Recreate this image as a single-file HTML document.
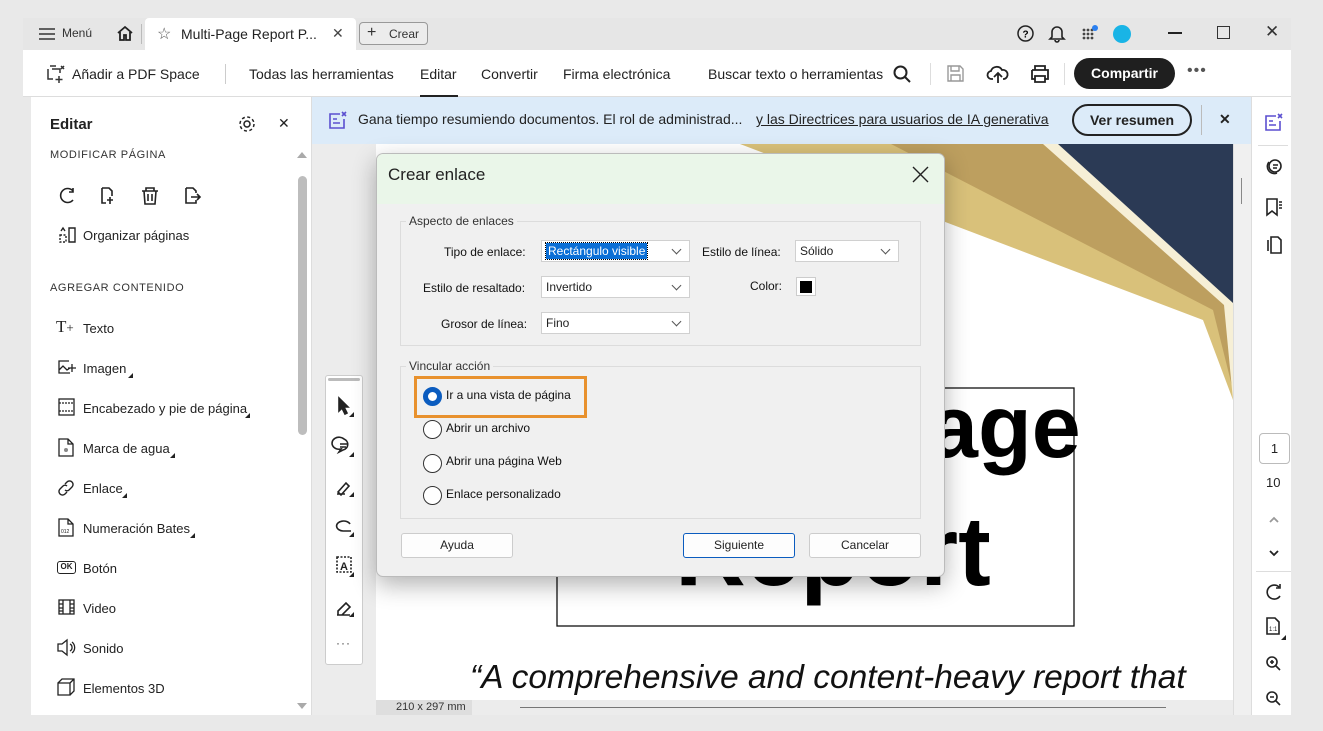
<!DOCTYPE html>
<html><head><meta charset="utf-8">
<style>
*{box-sizing:border-box;margin:0;padding:0}
body{width:1323px;height:731px;background:#e9e9e9;font-family:"Liberation Sans",sans-serif;color:#222;position:relative;overflow:hidden}
.a{position:absolute}
.t{position:absolute;white-space:nowrap}
svg{position:absolute;overflow:visible}
.sec{font-size:11px;letter-spacing:.6px;color:#333}
.it{font-size:13px;color:#222}
.dl{font-size:12px;color:#111}
.sel{position:absolute;height:22px;background:#fff;border:1px solid #d0d0d0;font-size:12px;padding:3px 0 0 4px}
.sel:after{content:"";position:absolute;right:9px;top:5px;width:6px;height:6px;border-right:1px solid #555;border-bottom:1px solid #555;transform:rotate(45deg)}
.rad{position:absolute;width:19px;height:19px;border:1px solid #333;border-radius:50%;background:#fff}
.btn{position:absolute;height:25px;background:#fdfdfd;border:1px solid #ccc;border-radius:3px;font-size:12px;text-align:center;line-height:23px}
.tri{position:absolute;width:0;height:0;border-left:5px solid transparent;border-bottom:5px solid #222}
</style></head><body>
<!-- title bar -->
<div class="a" style="left:23px;top:18px;width:1268px;height:32px;background:#e6e6e6"></div>
<svg style="left:39px;top:27px" width="16" height="14"><path d="M0 2h16M0 7h16M0 12h16" stroke="#333" stroke-width="1.5"/></svg>
<div class="t" style="left:62px;top:26px;font-size:12px;color:#333">Menú</div>
<svg style="left:116px;top:25px" width="18" height="16"><path d="M2 8L9 2l7 6M4 7v8h4v-5h2v5h4V7" fill="none" stroke="#222" stroke-width="1.8"/></svg>
<div class="a" style="left:141px;top:24px;width:1px;height:20px;background:#bbb"></div>
<div class="a" style="left:145px;top:18px;width:211px;height:32px;background:#fff;border-radius:4px 4px 0 0"></div>
<div class="t" style="left:157px;top:24px;font-size:16px;color:#555">☆</div>
<div class="t" style="left:181px;top:26px;font-size:14px;color:#222">Multi-Page Report P...</div>
<div class="t" style="left:332px;top:25px;font-size:14px;color:#444">✕</div>
<div class="a" style="left:359px;top:22px;width:69px;height:23px;border:1px solid #999;border-radius:4px;background:#ececec"></div>
<div class="t" style="left:367px;top:24px;font-size:16px;color:#333">+</div>
<div class="t" style="left:389px;top:27px;font-size:12px;color:#333">Crear</div>
<svg style="left:1017px;top:25px" width="17" height="17"><circle cx="8.5" cy="8.5" r="7.5" fill="none" stroke="#222" stroke-width="1.5"/><text x="8.5" y="12.5" font-size="10" font-weight="bold" text-anchor="middle" font-family="Liberation Sans">?</text></svg>
<svg style="left:1049px;top:24px" width="16" height="19"><path d="M3 13V8a5 5 0 0110 0v5l2 2H1zM6 16a2 2 0 004 0" fill="none" stroke="#222" stroke-width="1.6"/></svg>
<svg style="left:1082px;top:25px" width="18" height="18"><g fill="#444"><circle cx="2" cy="5" r="1.4"/><circle cx="6" cy="5" r="1.4"/><circle cx="2" cy="9" r="1.4"/><circle cx="6" cy="9" r="1.4"/><circle cx="10" cy="9" r="1.4"/><circle cx="2" cy="13" r="1.4"/><circle cx="6" cy="13" r="1.4"/><circle cx="10" cy="13" r="1.4"/><circle cx="10" cy="5" r="1.4"/></g><circle cx="13" cy="3" r="3" fill="#2a7ff0"/></svg>
<div class="a" style="left:1113px;top:25px;width:18px;height:18px;border-radius:50%;background:#19b4e6"></div>
<div class="a" style="left:1168px;top:32px;width:14px;height:2px;background:#222"></div>
<div class="a" style="left:1217px;top:26px;width:13px;height:13px;border:1.5px solid #333"></div>
<div class="t" style="left:1265px;top:22px;font-size:17px;color:#333">✕</div>
<!-- toolbar -->
<div class="a" style="left:23px;top:50px;width:1268px;height:47px;background:#fff;border-bottom:1px solid #ddd"></div>
<svg style="left:46px;top:64px" width="20" height="20"><path d="M4 2h6M2 5v10h5M6 5h8v4M13 12v7M9.5 15.5h7M15 2l3 3M18 2l-3 3" fill="none" stroke="#333" stroke-width="1.5"/></svg>
<div class="t" style="left:72px;top:66px;font-size:14px">Añadir a PDF Space</div>
<div class="a" style="left:225px;top:64px;width:1px;height:20px;background:#ccc"></div>
<div class="t" style="left:249px;top:66px;font-size:14px">Todas las herramientas</div>
<div class="t" style="left:420px;top:66px;font-size:14px">Editar</div>
<div class="a" style="left:420px;top:95px;width:38px;height:3px;background:#222"></div>
<div class="t" style="left:481px;top:66px;font-size:14px">Convertir</div>
<div class="t" style="left:563px;top:66px;font-size:14px">Firma electrónica</div>
<div class="t" style="left:708px;top:66px;font-size:14px">Buscar texto o herramientas</div>
<svg style="left:893px;top:65px" width="18" height="18"><circle cx="7.5" cy="7.5" r="6" fill="none" stroke="#222" stroke-width="2"/><path d="M12 12l5 5" stroke="#222" stroke-width="2"/></svg>
<div class="a" style="left:930px;top:63px;width:1px;height:22px;background:#ddd"></div>
<svg style="left:947px;top:65px" width="17" height="17"><path d="M1 1h12l3 3v12H1z M4 1v5h8V1 M4 16v-6h9v6" fill="none" stroke="#999" stroke-width="1.4"/></svg>
<svg style="left:987px;top:64px" width="22" height="20"><path d="M6 15H5a4 4 0 01-1-8 6 6 0 0111-1 4 4 0 012 9h-1M11 19v-9M7 13l4-4 4 4" fill="none" stroke="#222" stroke-width="1.8"/></svg>
<svg style="left:1030px;top:65px" width="20" height="18"><path d="M5 5V1h10v4M2 5h16v9h-3M5 14H2V5M5 11h10v6H5z" fill="none" stroke="#222" stroke-width="1.8"/></svg>
<div class="a" style="left:1064px;top:63px;width:1px;height:22px;background:#ddd"></div>
<div class="a" style="left:1074px;top:58px;width:101px;height:31px;border-radius:16px;background:#1f1f1f;color:#fff;font-size:14px;font-weight:bold;text-align:center;line-height:31px">Compartir</div>
<div class="t" style="left:1187px;top:62px;font-size:16px;color:#555;letter-spacing:1px">•••</div>
<!-- left panel -->
<div class="a" style="left:31px;top:97px;width:281px;height:618px;background:#fff;border-right:1px solid #ddd"></div>
<div class="t" style="left:50px;top:116px;font-size:15px;font-weight:bold">Editar</div>
<svg style="left:238px;top:115px" width="18" height="18"><circle cx="9" cy="9" r="3" fill="none" stroke="#222" stroke-width="1.5"/><circle cx="9" cy="9" r="7" fill="none" stroke="#222" stroke-width="1.5" stroke-dasharray="3 2.5"/></svg>
<div class="t" style="left:278px;top:115px;font-size:14px">✕</div>
<div class="t sec" style="left:50px;top:149px">MODIFICAR PÁGINA</div>
<div class="t sec" style="left:50px;top:282px">AGREGAR CONTENIDO</div>
<svg style="left:58px;top:186px" width="160" height="20" fill="none" stroke="#222" stroke-width="1.6"><path d="M15 5A7 7 0 1015 14M15 2v4h-4"/><path d="M44 2h7l3 3v5M44 2v15h4M52 11v7M49 14h6"/><path d="M84 5h16M88 5V2h8v3M86 5l1 13h10l1-13M90 8v7M94 8v7"/><path d="M128 2h7l3 3v2M128 2v15h10v-3M133 11h9M139 8l3 3-3 3"/></svg>
<svg style="left:58px;top:226px" width="18" height="18" fill="none" stroke="#222" stroke-width="1.4"><path d="M11 2h6v14h-6z" /><path d="M2 9h6v7H2z" stroke-dasharray="2 1.5"/><path d="M3 5l2-3 2 3"/></svg>
<div class="t it" style="left:83px;top:228px">Organizar páginas</div>
<div class="t" style="left:56px;top:317px;font-size:17px;font-family:'Liberation Serif',serif">T<span style="font-size:13px">+</span></div>
<div class="t it" style="left:83px;top:321px">Texto</div>
<svg style="left:58px;top:359px" width="19" height="17" fill="none" stroke="#222" stroke-width="1.3"><path d="M11 2H1v12h11M1 11l4-4 4 4 3-2M14 5v8M10 9h8"/></svg>
<div class="t it" style="left:83px;top:361px">Imagen</div><div class="tri" style="left:128px;top:373px"></div>
<svg style="left:58px;top:398px" width="17" height="19" fill="none" stroke="#222" stroke-width="1.3"><rect x="1" y="1" width="15" height="16"/><path d="M1 5h15M1 13h15" stroke-dasharray="2 1"/></svg>
<div class="t it" style="left:83px;top:401px">Encabezado y pie de página</div><div class="tri" style="left:245px;top:413px"></div>
<svg style="left:58px;top:438px" width="16" height="19" fill="none" stroke="#222" stroke-width="1.3"><path d="M1 1h9l5 5v12H1zM10 1v5h5"/><circle cx="8" cy="12" r="2" fill="#888" stroke="none"/></svg>
<div class="t it" style="left:83px;top:441px">Marca de agua</div><div class="tri" style="left:170px;top:453px"></div>
<svg style="left:57px;top:479px" width="18" height="18" fill="none" stroke="#222" stroke-width="1.4"><path d="M8 5l2-2a3 3 0 015 5l-3 3a3 3 0 01-4 0M10 13l-2 2a3 3 0 01-5-5l3-3a3 3 0 014 0"/></svg>
<div class="t it" style="left:83px;top:481px">Enlace</div><div class="tri" style="left:122px;top:493px"></div>
<svg style="left:58px;top:518px" width="16" height="19" fill="none" stroke="#222" stroke-width="1.3"><path d="M1 1h9l5 5v12H1zM10 1v5h5"/><text x="3" y="15" font-size="5" fill="#222" stroke="none">012</text></svg>
<div class="t it" style="left:83px;top:521px">Numeración Bates</div><div class="tri" style="left:190px;top:533px"></div>
<div class="a" style="left:57px;top:561px;width:19px;height:13px;border:1.4px solid #222;border-radius:3px;font-size:8px;font-weight:bold;text-align:center;line-height:10px">OK</div>
<div class="t it" style="left:83px;top:561px">Botón</div>
<svg style="left:58px;top:599px" width="17" height="16" fill="none" stroke="#222" stroke-width="1.3"><rect x="1" y="1" width="15" height="14"/><path d="M5 1v14M12 1v14M1 5h4M1 9h4M12 5h4M12 9h4M1 12h4M12 12h4"/></svg>
<div class="t it" style="left:83px;top:601px">Video</div>
<svg style="left:57px;top:639px" width="20" height="17" fill="none" stroke="#222" stroke-width="1.3"><path d="M1 5h4l5-4v15l-5-4H1zM13 5a4 4 0 010 7M15 3a7 7 0 010 11"/></svg>
<div class="t it" style="left:83px;top:641px">Sonido</div>
<svg style="left:57px;top:678px" width="19" height="18" fill="none" stroke="#222" stroke-width="1.3"><path d="M1 5h12v12H1zM1 5l4-4h12v12l-4 4M13 5l4-4"/></svg>
<div class="t it" style="left:83px;top:681px">Elementos 3D</div>
<div class="a" style="left:298px;top:176px;width:9px;height:259px;background:#bdbdbd;border-radius:5px"></div>
<div class="tri" style="left:297px;top:152px;border-left:5px solid transparent;border-right:5px solid transparent;border-bottom:6px solid #aaa"></div>
<div class="a" style="left:297px;top:703px;width:0;height:0;border-left:5px solid transparent;border-right:5px solid transparent;border-top:6px solid #aaa"></div>
<!-- doc area -->
<div class="a" style="left:312px;top:97px;width:939px;height:618px;background:#ececec"></div>
<div class="a" style="left:376px;top:144px;width:857px;height:556px;background:#fff;overflow:hidden">
<svg style="left:0;top:0" width="857" height="556">
<polygon points="364,0 857,0 857,256 827,176" fill="#d9c17a"/>
<polygon points="515,0 857,0 857,246 837,166" fill="#bd9f5f"/>
<polygon points="667,0 857,0 857,256 848,161" fill="#f6efd6"/>
<polygon points="682,0 857,0 857,159" fill="#2b3a55"/>
<rect x="181" y="244" width="517" height="238" fill="none" stroke="#111" stroke-width="1.3"/>
<text x="553" y="313" font-family="Liberation Sans" font-weight="bold" font-size="88" fill="#000">age</text>
<text x="299" y="441" font-family="Liberation Sans" font-weight="bold" font-size="98" fill="#000">Report</text>
<text x="94" y="544" font-family="Liberation Sans" font-style="italic" font-size="33.5" fill="#111">“A comprehensive and content-heavy report that</text>
</svg>
</div>
<div class="a" style="left:376px;top:700px;width:857px;height:15px;background:#ececec"></div>
<div class="a" style="left:376px;top:700px;width:96px;height:15px;background:#dedede"></div>
<div class="t" style="left:396px;top:701px;font-size:11px;color:#333">210 x 297 mm</div>
<div class="a" style="left:520px;top:707px;width:646px;height:1px;background:#777"></div>
<div class="a" style="left:1233px;top:144px;width:18px;height:571px;background:#f0f0f0;border-left:1px solid #ddd"></div>
<div class="a" style="left:1241px;top:178px;width:1px;height:26px;background:#888"></div>
<!-- floating toolbar -->
<div class="a" style="left:325px;top:375px;width:38px;height:290px;background:#fff;border:1px solid #ccc;border-radius:3px"></div>
<div class="a" style="left:328px;top:378px;width:32px;height:3px;background:#bbb;border-radius:2px"></div>
<svg style="left:334px;top:395px" width="22" height="250" fill="none" stroke="#222" stroke-width="1.6">
<path d="M5 3v13l3-3 3 6 2-1-3-6h4z" fill="#222"/>
<path d="M10 44a7 6 0 10-3 10l-2 3 4-2a7 6 0 001-11zM6 49h8M6 52h6"/>
<path d="M4 97l8-9 3 3-8 9zM3 99h8"/>
<path d="M16 129a7 5 0 10-7 7h8"/>
<rect x="3" y="162" width="14" height="15" stroke-dasharray="2 1.5"/><text x="6" y="175" font-size="11" font-weight="bold" fill="#222" stroke="none" font-family="Liberation Sans">A</text>
<path d="M4 216l8-8 4 4-8 8H4zM3 220h13"/>
</svg>
<div class="tri" style="left:349px;top:412px"></div><div class="tri" style="left:349px;top:452px"></div><div class="tri" style="left:349px;top:492px"></div><div class="tri" style="left:349px;top:532px"></div><div class="tri" style="left:349px;top:572px"></div><div class="tri" style="left:349px;top:612px"></div>
<div class="t" style="left:336px;top:636px;font-size:12px;color:#444;letter-spacing:1px">···</div>
<!-- banner -->
<div class="a" style="left:312px;top:97px;width:939px;height:47px;background:#dcebf9"></div>
<svg style="left:328px;top:111px" width="20" height="19" fill="none" stroke="#5b4fd0" stroke-width="1.6"><path d="M12 3H2v14h14V8M5 8h4M5 12h7M14 1l4 4M18 1l-4 4"/></svg>
<div class="t" style="left:358px;top:111px;font-size:14px;color:#222">Gana tiempo resumiendo documentos. El rol de administrad...</div>
<div class="t" style="left:756px;top:111px;font-size:14px;color:#222;text-decoration:underline">y las Directrices para usuarios de IA generativa</div>
<div class="a" style="left:1072px;top:104px;width:120px;height:32px;border:2px solid #222;border-radius:16px;font-size:14px;font-weight:bold;text-align:center;line-height:28px">Ver resumen</div>
<div class="a" style="left:1201px;top:105px;width:1px;height:30px;background:#bbb"></div>
<div class="t" style="left:1219px;top:111px;font-size:14px;font-weight:bold">✕</div>
<!-- right rail -->
<div class="a" style="left:1251px;top:97px;width:40px;height:618px;background:#fff;border-left:1px solid #ddd"></div>
<svg style="left:1264px;top:113px" width="20" height="19" fill="none" stroke="#5b4fd0" stroke-width="1.6"><path d="M12 3H2v14h14V8M5 8h4M5 12h7M14 1l4 4M18 1l-4 4"/></svg>
<div class="a" style="left:1258px;top:145px;width:30px;height:1px;background:#ddd"></div>
<svg style="left:1265px;top:157px" width="18" height="100" fill="none" stroke="#222" stroke-width="1.6">
<circle cx="10" cy="9" r="6"/><path d="M8 8h5M8 11h4M4 5a7 7 0 008 11"/>
<path d="M2 42h10v16l-5-4-5 4zM14 45h3M14 48h3M14 51h3"/>
<path d="M6 80h7l3 3v13H6zM3 83v11"/>
</svg>
<div class="a" style="left:1259px;top:433px;width:31px;height:31px;border:1px solid #bbb;border-radius:4px;font-size:13px;text-align:center;line-height:29px">1</div>
<div class="t" style="left:1266px;top:475px;font-size:13px">10</div>
<svg style="left:1268px;top:515px" width="12" height="45" fill="none" stroke-width="1.8"><path d="M2 7l4-4 4 4" stroke="#999"/><path d="M2 36l4 4 4-4" stroke="#222"/></svg>
<div class="a" style="left:1256px;top:571px;width:35px;height:1px;background:#ddd"></div>
<svg style="left:1265px;top:583px" width="20" height="125" fill="none" stroke="#222" stroke-width="1.6">
<path d="M14 4A7 7 0 1015 13M15 1v4h-4"/>
<path d="M2 35h8l4 4v12H2z"/><text x="4" y="48" font-size="6" fill="#222" stroke="none">1:1</text>
<circle cx="7" cy="79" r="5"/><path d="M11 83l4 4M5 79h4M7 77v4"/>
<circle cx="7" cy="114" r="5"/><path d="M11 118l4 4M5 114h4"/>
</svg>
<div class="tri" style="left:1281px;top:635px"></div>
<!-- dialog -->
<div class="a" style="left:376px;top:153px;width:569px;height:424px;background:#f0f0f0;border:1px solid #bbb;border-radius:7px;box-shadow:0 8px 24px rgba(0,0,0,.3);overflow:hidden">
<div class="a" style="left:0;top:0;width:569px;height:50px;background:#eaf6e9"></div>
</div>
<div class="t" style="left:388px;top:165px;font-size:17px;color:#222">Crear enlace</div>
<svg style="left:912px;top:166px" width="17" height="17"><path d="M1 1l15 15M16 1L1 16" stroke="#222" stroke-width="1.4"/></svg>
<div class="a" style="left:400px;top:221px;width:521px;height:125px;border:1px solid #dcdcdc"></div>
<div class="t dl" style="left:406px;top:214px;background:#f0f0f0;padding:0 3px;color:#333">Aspecto de enlaces</div>
<div class="t dl" style="left:444px;top:245px">Tipo de enlace:</div>
<div class="sel" style="left:541px;top:240px;width:149px"><span style="background:#0b6fd6;color:#fff;padding:1px 2px;outline:1px dotted #000">Rectángulo visible</span></div>
<div class="t dl" style="left:702px;top:245px">Estilo de línea:</div>
<div class="sel" style="left:795px;top:240px;width:104px">Sólido</div>
<div class="t dl" style="left:423px;top:281px">Estilo de resaltado:</div>
<div class="sel" style="left:541px;top:276px;width:149px">Invertido</div>
<div class="t dl" style="left:750px;top:279px">Color:</div>
<div class="a" style="left:796px;top:277px;width:20px;height:19px;border:1px solid #ccc;background:#fff"><div class="a" style="left:3px;top:3px;width:12px;height:12px;background:#000"></div></div>
<div class="t dl" style="left:441px;top:317px">Grosor de línea:</div>
<div class="sel" style="left:541px;top:312px;width:149px">Fino</div>
<div class="a" style="left:400px;top:366px;width:521px;height:153px;border:1px solid #dcdcdc"></div>
<div class="t dl" style="left:406px;top:359px;background:#f0f0f0;padding:0 3px;color:#333">Vincular acción</div>
<div class="a" style="left:414px;top:376px;width:173px;height:42px;border:3px solid #e8912d"></div>
<div class="rad" style="left:423px;top:387px;border:5px solid #0b5cbf"></div>
<div class="t dl" style="left:446px;top:388px">Ir a una vista de página</div>
<div class="rad" style="left:423px;top:420px"></div><div class="t dl" style="left:446px;top:421px">Abrir un archivo</div>
<div class="rad" style="left:423px;top:454px"></div><div class="t dl" style="left:446px;top:454px">Abrir una página Web</div>
<div class="rad" style="left:423px;top:486px"></div><div class="t dl" style="left:446px;top:487px">Enlace personalizado</div>
<div class="btn" style="left:401px;top:533px;width:112px">Ayuda</div>
<div class="btn" style="left:683px;top:533px;width:112px;border-color:#0b5cbf">Siguiente</div>
<div class="btn" style="left:809px;top:533px;width:112px">Cancelar</div>
</body></html>
